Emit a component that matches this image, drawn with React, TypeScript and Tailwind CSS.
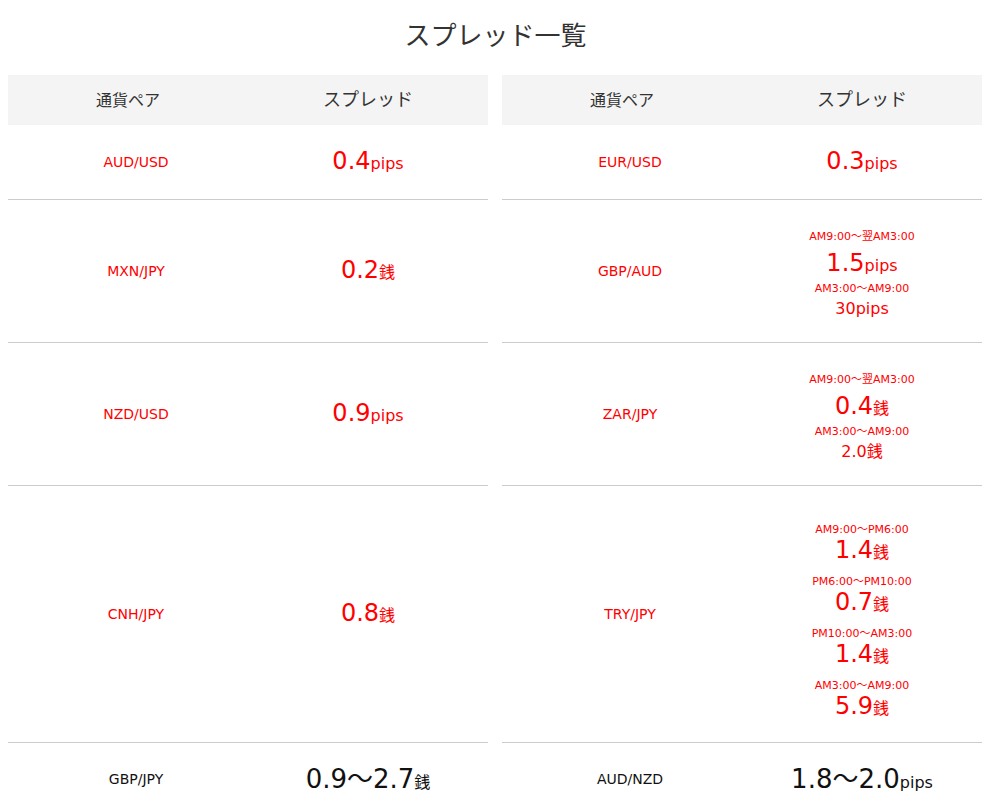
import React from "react";

type Session = { time: string; num: string; unit: string; small?: boolean };
type Cell = {
  pair: string;
  num?: string;
  unit?: string;
  sessions?: Session[];
  kind?: "double" | "quad";
  dark?: boolean;
};

const rows: [Cell, Cell][] = [
  [
    { pair: "AUD/USD", num: "0.4", unit: "pips" },
    { pair: "EUR/USD", num: "0.3", unit: "pips" },
  ],
  [
    { pair: "MXN/JPY", num: "0.2", unit: "銭" },
    {
      pair: "GBP/AUD",
      kind: "double",
      sessions: [
        { time: "AM9:00～翌AM3:00", num: "1.5", unit: "pips" },
        { time: "AM3:00～AM9:00", num: "30", unit: "pips", small: true },
      ],
    },
  ],
  [
    { pair: "NZD/USD", num: "0.9", unit: "pips" },
    {
      pair: "ZAR/JPY",
      kind: "double",
      sessions: [
        { time: "AM9:00～翌AM3:00", num: "0.4", unit: "銭" },
        { time: "AM3:00～AM9:00", num: "2.0", unit: "銭", small: true },
      ],
    },
  ],
  [
    { pair: "CNH/JPY", num: "0.8", unit: "銭" },
    {
      pair: "TRY/JPY",
      kind: "quad",
      sessions: [
        { time: "AM9:00～PM6:00", num: "1.4", unit: "銭" },
        { time: "PM6:00～PM10:00", num: "0.7", unit: "銭" },
        { time: "PM10:00～AM3:00", num: "1.4", unit: "銭" },
        { time: "AM3:00～AM9:00", num: "5.9", unit: "銭" },
      ],
    },
  ],
  [
    { pair: "GBP/JPY", num: "0.9～2.7", unit: "銭", dark: true },
    { pair: "AUD/NZD", num: "1.8～2.0", unit: "pips", dark: true },
  ],
];

// number + unit on one line, fixed box height so mixed fonts don't grow the row
function Big({ num, unit, h, size = "text-[24px]" }: { num: string; unit: string; h: string; size?: string }) {
  return (
    <div className={`flex items-center justify-center ${h}`}>
      <div className="flex items-baseline leading-none whitespace-nowrap">
        <span className={size}>{num}</span>
        <span className="text-[16px]">{unit}</span>
      </div>
    </div>
  );
}

function Value({ cell }: { cell: Cell }) {
  if (cell.kind === "double" && cell.sessions) {
    const [a, b] = cell.sessions;
    return (
      <div className="flex flex-col items-center pt-[28px] pb-[22px] text-[#ff0000]">
        <div className="h-[18px] text-[11px] leading-[18px] whitespace-nowrap">{a.time}</div>
        <Big num={a.num} unit={a.unit} h="h-[34px]" />
        <div className="h-[18px] text-[11px] leading-[18px] whitespace-nowrap">{b.time}</div>
        <div className="flex h-[22px] items-center text-[16px] leading-none">
          {b.num}
          {b.unit}
        </div>
      </div>
    );
  }
  if (cell.kind === "quad" && cell.sessions) {
    return (
      <div className="flex flex-col items-center gap-[12px] pt-[37px] pb-[23px] text-[#ff0000]">
        {cell.sessions.map((s, i) => (
          <div key={i} className="flex flex-col items-center">
            <div className="h-[14px] text-[11px] leading-[14px] whitespace-nowrap">{s.time}</div>
            <Big num={s.num} unit={s.unit} h="h-[26px]" />
          </div>
        ))}
      </div>
    );
  }
  if (cell.dark) {
    return (
      <div className="py-6 text-[#111]">
        <Big num={cell.num!} unit={cell.unit!} h="h-[24px]" size="text-[26px]" />
      </div>
    );
  }
  return (
    <div className="pt-[23px] pb-[25px] text-[#ff0000]">
      <Big num={cell.num!} unit={cell.unit!} h="h-[26px]" />
    </div>
  );
}

function Half({ cell, last }: { cell: Cell; last: boolean }) {
  return (
    <div
      className={`grid grid-cols-2 items-center text-center ${
        last ? "" : "border-b border-[#cccccc]"
      }`}
    >
      <div className={`pl-4 text-[14px] ${cell.dark ? "text-[#111]" : "text-[#ff0000]"}`}>
        {cell.pair}
      </div>
      <div className="flex justify-center">
        <Value cell={cell} />
      </div>
    </div>
  );
}

export default function App() {
  return (
    <div className="min-h-[812px] bg-white px-2 font-['DejaVu_Sans','Noto_Sans_CJK_JP',sans-serif]">
      <h1 className="h-[75px] pt-[15px] text-center text-[26px] leading-[37px] text-[#333] font-['Noto_Sans_CJK_JP',sans-serif]">
        スプレッド一覧
      </h1>

      <div className="grid grid-cols-[480px_480px] gap-x-[14px]">
        {[0, 1].map((k) => (
          <div
            key={k}
            className="grid h-[50px] grid-cols-2 items-center bg-[#f4f4f4] pb-[3px] text-center text-[#333] font-['Noto_Sans_CJK_JP',sans-serif]"
          >
            <div className="text-[16px]">通貨ペア</div>
            <div className="text-[18px]">スプレッド</div>
          </div>
        ))}

        {rows.map((r, i) => (
          <React.Fragment key={i}>
            <Half cell={r[0]} last={i === rows.length - 1} />
            <Half cell={r[1]} last={i === rows.length - 1} />
          </React.Fragment>
        ))}
      </div>
    </div>
  );
}
